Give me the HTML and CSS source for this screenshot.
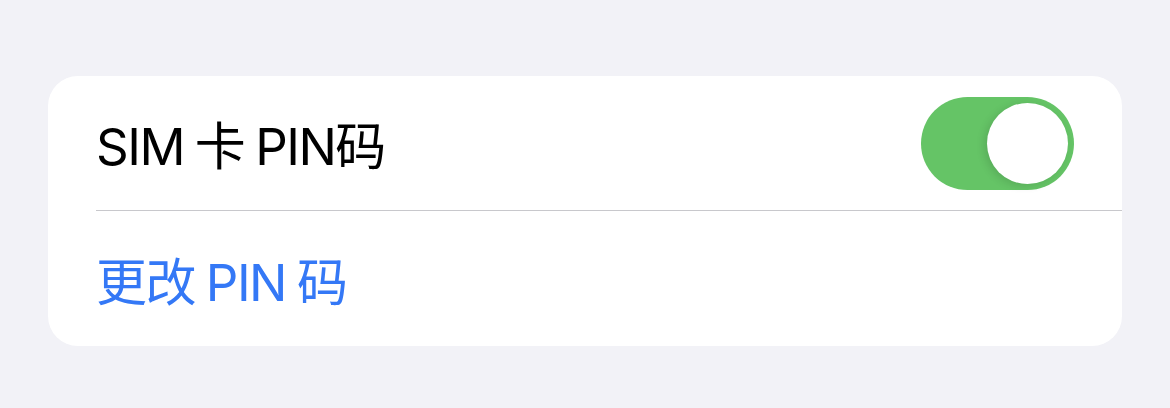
FILE: index.html
```html
<!DOCTYPE html>
<html lang="zh-CN">
<head>
    <meta charset="UTF-8">
    <meta name="viewport" content="width=device-width, initial-scale=1.0">
    <title>SIM 卡 PIN</title>
    <link rel="stylesheet" href="styles.css">
</head>
<body>
    <div class="group">
        <div class="row">
            <span class="label">SIM 卡 PIN码</span>
            <div class="switch on">
                <div class="knob"></div>
            </div>
        </div>
        <div class="row">
            <span class="label link">更改 PIN 码</span>
        </div>
    </div>
</body>
</html>
```

FILE: styles.css
```css
body {
    margin: 0;
    padding: 76px 48px 0 48px;
    background-color: #f2f2f7;
    font-family: Inter, "Noto Sans CJK SC", sans-serif;
}
.group {
    background-color: #fff;
    border-radius: 30px;
    overflow: hidden;
}
.row {
    display: flex;
    align-items: center;
    justify-content: space-between;
    height: 134px;
    margin-left: 48px;
    padding-right: 48px;
}
.row + .row {
    border-top: 1px solid #c8c8cc;
    height: 135px;
}
.label {
    font-size: 51px;
    color: #000;
    letter-spacing: -1.5px;
    word-spacing: -2px;
}
.link {
    color: #3478f6;
}
.switch {
    width: 153px;
    height: 93px;
    border-radius: 47px;
    background-color: #65c466;
    display: flex;
    align-items: center;
    justify-content: flex-end;
    padding: 0 6px;
    box-sizing: border-box;
}
.knob {
    width: 81px;
    height: 81px;
    border-radius: 50%;
    background-color: #fff;
    box-shadow: -3px 2px 8px rgba(0, 0, 0, 0.12);
}
```
